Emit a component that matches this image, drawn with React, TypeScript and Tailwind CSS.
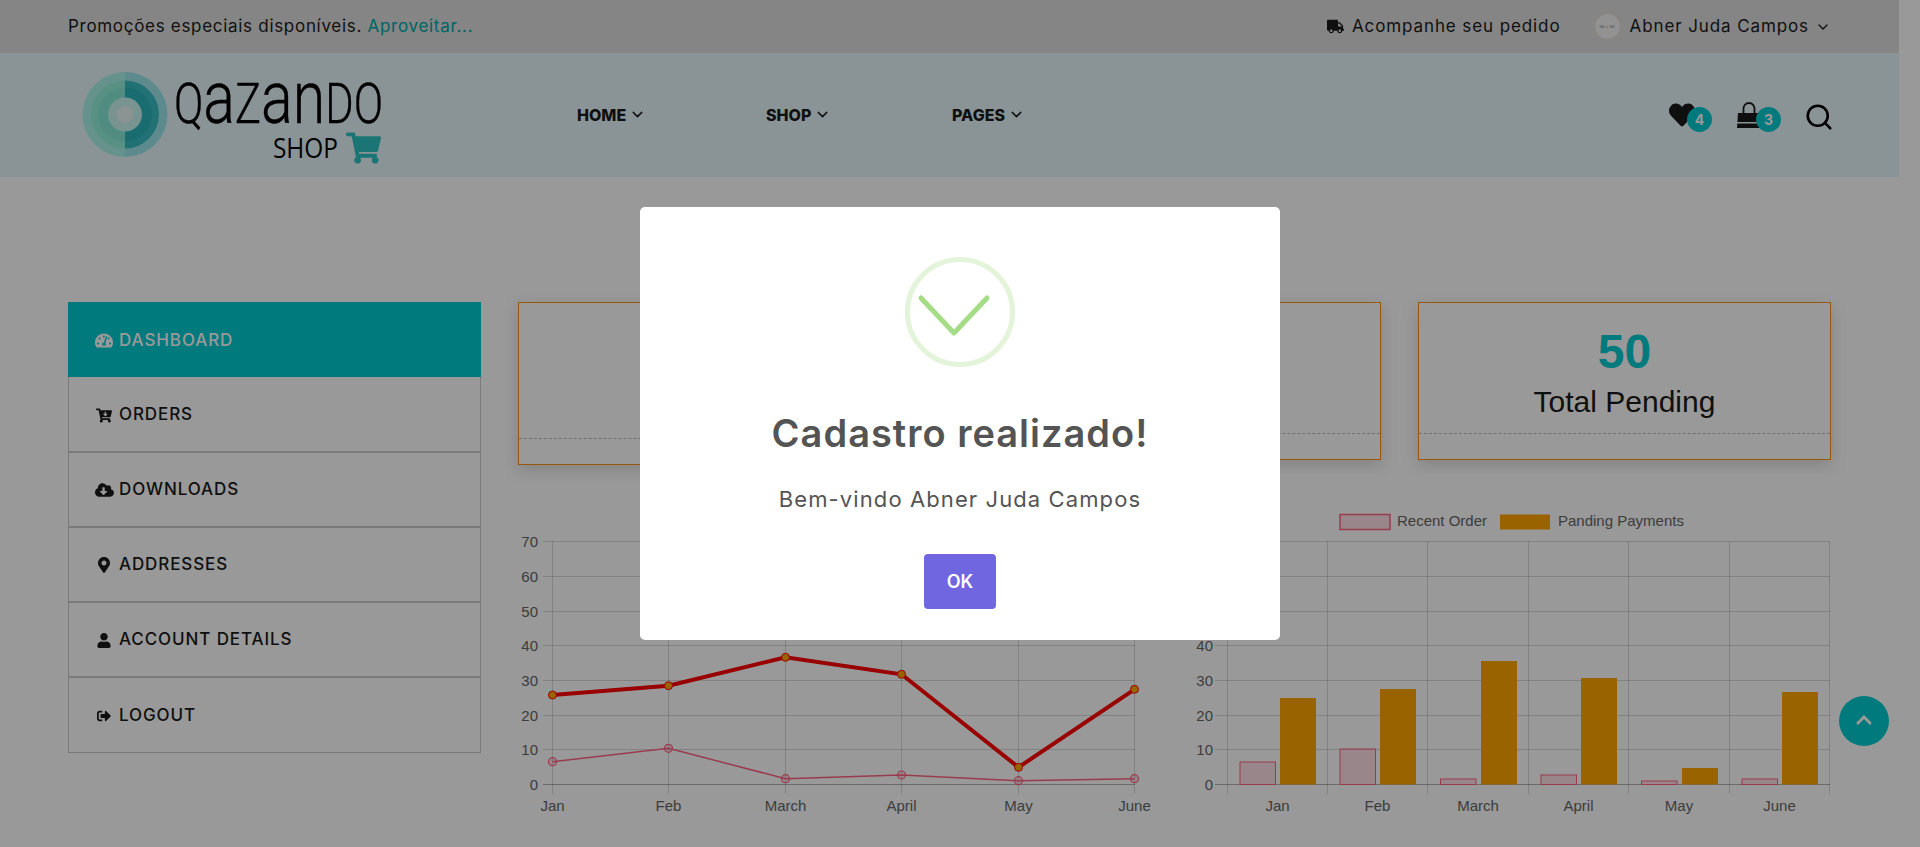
import React from 'react';
import { FaCartArrowDown, FaChevronUp, FaCloudDownloadAlt, FaHeart, FaMapMarkerAlt, FaShoppingCart, FaSignOutAlt, FaTachometerAlt, FaTruck, FaUser } from 'react-icons/fa';
import { ChevronDown, Search } from 'lucide-react';

const menu = [
  { label: 'DASHBOARD', icon: FaTachometerAlt, size: 'w-[18px] h-[17px]' },
  { label: 'ORDERS', icon: FaCartArrowDown, size: 'w-[16px] h-[15px]' },
  { label: 'DOWNLOADS', icon: FaCloudDownloadAlt, size: 'w-[19px] h-[16px]' },
  { label: 'ADDRESSES', icon: FaMapMarkerAlt, size: 'w-[12px] h-[16px]' },
  { label: 'ACCOUNT DETAILS', icon: FaUser, size: 'w-[14px] h-[15px]' },
  { label: 'LOGOUT', icon: FaSignOutAlt, size: 'w-[16px] h-[14px]' },
];

const months = ['Jan', 'Feb', 'March', 'April', 'May', 'June'];
const gridY = [541.5, 576.5, 611.5, 645.5, 680.5, 715.5, 749.5];
const zeroY = 784.5;
const lineX = [552.5, 668.5, 785.5, 901.5, 1018.5, 1134.5];
const redY = [695, 685.7, 657.3, 674.3, 767.3, 689.3];
const pinkY = [761.7, 748.3, 778.7, 775, 780.7, 778.7];
const barX = [1227.5, 1327.5, 1427.5, 1528.5, 1628.5, 1729.5, 1829.5];
const barPink = [
  [1240, 762],
  [1340, 749],
  [1440.5, 779],
  [1541, 775],
  [1641.5, 781],
  [1742, 779],
];
const barOrange = [
  [1280, 698],
  [1380, 689],
  [1481, 661],
  [1581, 678],
  [1682, 768],
  [1782, 692],
];
const chartFont = 'Liberation Sans, sans-serif';

function points(xs: number[], ys: number[]) {
  return xs.map((x, i) => `${x},${ys[i]}`).join(' ');
}

function YLabels({ x }: { x: number }) {
  return (
    <>
      {['70', '60', '50', '40', '30', '20', '10', '0'].map((v, i) => (
        <text key={v} x={x} y={(i === 7 ? zeroY : gridY[i]) + 5} textAnchor="end" fontSize="15" fill="#666666" fontFamily={chartFont}>
          {v}
        </text>
      ))}
    </>
  );
}

function LineChart() {
  return (
    <svg viewBox="518 500 640 330" className="w-[640px] h-[330px]">
      {gridY.map(y => (
        <line key={y} x1={543} x2={1135} y1={y} y2={y} stroke="#000" strokeOpacity="0.15" />
      ))}
      <line x1={543} x2={1135} y1={zeroY} y2={zeroY} stroke="#000" strokeOpacity="0.3" />
      {lineX.map(x => (
        <line key={x} x1={x} x2={x} y1={541} y2={794} stroke="#000" strokeOpacity="0.15" />
      ))}
      <YLabels x={538} />
      {months.map((m, i) => (
        <text key={m} x={lineX[i]} y={811} textAnchor="middle" fontSize="15" fill="#666666" fontFamily={chartFont}>
          {m}
        </text>
      ))}
      <polyline points={points(lineX, pinkY)} fill="none" stroke="#ff6384" strokeWidth="1.5" />
      {lineX.map((x, i) => (
        <circle key={x} cx={x} cy={pinkY[i]} r="4" fill="#ff6384" fillOpacity="0.2" stroke="#ff6384" strokeWidth="1.2" />
      ))}
      <polyline points={points(lineX, redY)} fill="none" stroke="#ff0000" strokeWidth="4" />
      {lineX.map((x, i) => (
        <circle key={x} cx={x} cy={redY[i]} r="4" fill="#ffa500" stroke="#ff0000" strokeWidth="1" />
      ))}
    </svg>
  );
}

function BarChart() {
  return (
    <svg viewBox="1190 500 641 330" className="w-[641px] h-[330px]">
      <rect x={1340} y={514.5} width={50} height={15} fill="#ff6384" fillOpacity="0.2" stroke="#ff6384" strokeWidth="1.5" />
      <text x={1397} y={526} fontSize="15" fill="#666666" fontFamily={chartFont}>Recent Order</text>
      <rect x={1500} y={514.5} width={50} height={15} fill="#ffa500" />
      <text x={1558} y={526} fontSize="15" fill="#666666" fontFamily={chartFont}>Panding Payments</text>
      {gridY.map(y => (
        <line key={y} x1={1215} x2={1830} y1={y} y2={y} stroke="#000" strokeOpacity="0.15" />
      ))}
      <line x1={1215} x2={1830} y1={zeroY} y2={zeroY} stroke="#000" strokeOpacity="0.3" />
      {barX.map(x => (
        <line key={x} x1={x} x2={x} y1={541} y2={794} stroke="#000" strokeOpacity="0.15" />
      ))}
      <YLabels x={1213} />
      {months.map((m, i) => (
        <text key={m} x={(barX[i] + barX[i + 1]) / 2} y={811} textAnchor="middle" fontSize="15" fill="#666666" fontFamily={chartFont}>
          {m}
        </text>
      ))}
      {barPink.map(([x, y]) => (
        <rect key={x} x={x} y={y} width={35.5} height={zeroY - y} fill="#ff6384" fillOpacity="0.2" stroke="#ff6384" strokeWidth="1" />
      ))}
      {barOrange.map(([x, y]) => (
        <rect key={x} x={x} y={y} width={36} height={zeroY - y} fill="#ffa500" />
      ))}
    </svg>
  );
}

function Logo() {
  return (
    <svg width="330" height="110" viewBox="68 60 330 110" className="shrink-0 overflow-visible">
      {[
        [42.5, '#a8f5e8', '#9ae6ec'],
        [34, '#95f0dd', '#38bcc4'],
        [27, '#85ecd5', '#2ab5bb'],
        [17, '#c8f5f0', '#c8f5f0'],
        [8.5, '#e8f5f5', '#e8f5f5'],
      ].map(([r, left, right]) => (
        <g key={r as number}>
          <path d={`M125 ${114.5 - (r as number)} a${r} ${r} 0 0 0 0 ${2 * (r as number)} z`} fill={left as string} />
          <path d={`M125 ${114.5 - (r as number)} a${r} ${r} 0 0 1 0 ${2 * (r as number)} z`} fill={right as string} />
        </g>
      ))}
      <text x={174} y={123} fontWeight="300" fill="#000" stroke="#000" strokeWidth="0.4" fontFamily="Roboto, sans-serif" textLength="209" lengthAdjust="spacingAndGlyphs">
        <tspan fontSize="55">Q</tspan>
        <tspan fontSize="75">a</tspan>
        <tspan fontSize="55">Z</tspan>
        <tspan fontSize="75">an</tspan>
        <tspan fontSize="55">DO</tspan>
      </text>
      <text x={273} y={158} fontSize="28" fill="#000" fontFamily="Open Sans, sans-serif" textLength="65" lengthAdjust="spacingAndGlyphs">SHOP</text>
    </svg>
  );
}

function BagIcon() {
  return (
    <svg viewBox="0 0 24 26" className="w-[24px] h-[26px]">
      <path d="M6.5 12V6.5a5.5 5.5 0 0 1 11 0V12" fill="none" stroke="#1a1a1a" strokeWidth="1.8" />
      <path d="M1 11h22l1 15H0z" fill="#1a1a1a" />
      <rect x="0" y="20" width="24" height="1.5" fill="#e6f7fa" />
    </svg>
  );
}

export default function App() {
  return (
    <div className="relative h-[847px] overflow-hidden bg-white font-['Inter',sans-serif] text-[#1a1a1a]">
      <div className="w-[1899px]">
        {/* top bar */}
        <div className="h-[53px] bg-[#dedede] pl-[68px] pr-[68px] flex items-center justify-between text-[17px]">
          <p className="tracking-[0.7px]">
            Promoções especiais disponíveis. <a className="text-[#00a5a8]">Aproveitar...</a>
          </p>
          <div className="flex items-center tracking-[0.9px]">
            <FaTruck className="w-[17px] h-[17px] mr-[8px]" />
            <span>Acompanhe seu pedido</span>
            <span className="ml-[33px] mr-[9px] w-[27px] h-[27px] rounded-full bg-[#f3f3f3] border border-[#e8d8c8] flex items-center justify-center text-[4px] tracking-normal text-[#777]">50 x 50</span>
            <span>Abner Juda Campos</span>
            <ChevronDown className="w-[16px] h-[16px] ml-[6px]" />
          </div>
        </div>
        {/* header */}
        <div className="h-[124px] bg-[#e6f7fa] pr-[68px] flex items-center">
          <div className="ml-[68px] relative">
            <Logo />
            <FaShoppingCart className="absolute left-[278px] top-[71px] w-[35px] h-[34px] text-[#2fc4c4]" />
          </div>
          <nav className="ml-[179px] -mt-px flex items-center font-extrabold text-[16px] text-[#1a1a1a]">
            <a className="flex items-center w-[189px]">HOME<ChevronDown className="w-[17px] h-[17px] ml-[3px]" /></a>
            <a className="flex items-center w-[186px]">SHOP<ChevronDown className="w-[17px] h-[17px] ml-[3px]" /></a>
            <a className="flex items-center">PAGES<ChevronDown className="w-[17px] h-[17px] ml-[3px]" /></a>
          </nav>
          <div className="ml-auto flex items-center">
            <div className="relative mr-[42px]">
              <FaHeart className="w-[26px] h-[26px]" />
              <span className="absolute left-[18px] top-[5px] w-[25px] h-[25px] rounded-full bg-[#00cccf] text-white text-[14px] font-bold flex items-center justify-center">4</span>
            </div>
            <div className="relative mr-[43px]">
              <BagIcon />
              <span className="absolute left-[19px] top-[5px] w-[25px] h-[25px] rounded-full bg-[#00cccf] text-white text-[14px] font-bold flex items-center justify-center">3</span>
            </div>
            <Search className="w-[30px] h-[30px] mt-[3px] -mr-[3px] text-black" strokeWidth={2.1} />
          </div>
        </div>

        <main className="pt-[125px] pl-[68px] pr-[68px] flex gap-[37px]">
          {/* sidebar */}
          <ul className="w-[413px] shrink-0 border-x border-[#ccc] h-fit">
            {menu.map((item, i) => (
              <li
                key={item.label}
                className={`h-[75px] flex items-center text-[17px] font-medium tracking-[0.9px] border-[#ccc] ${i === 0 ? 'bg-[#00cccf] text-white -mx-px pl-[21px] pt-[2px]' : 'pl-[20px] pt-[1px] border-b-2 last:border-b'} ${i === 1 ? 'mt-px' : ''}`}
              >
                <span className="w-[30px] flex justify-center">
                  <item.icon className={item.size} />
                </span>
                {item.label}
              </li>
            ))}
          </ul>

          <div className="w-[1313px]">
            {/* cards */}
            <div className="flex items-start justify-between">
              {[
                { h: 'h-[163px]', dash: 'mt-[135px]' },
                { h: 'h-[158px]', dash: 'mt-[130px]' },
              ].map((c, i) => (
                <div key={i} className={`w-[413px] ${c.h} border border-[#ff9010] shadow-[0_5px_15px_rgba(0,0,0,0.15)]`}>
                  <div className={`${c.dash} border-t border-dashed border-[#bbb]`} />
                </div>
              ))}
              <div className="w-[413px] h-[158px] border border-[#ff9010] shadow-[0_5px_15px_rgba(0,0,0,0.15)] text-center font-['Liberation_Sans',sans-serif]">
                <div className="mt-[22px] text-[48px] leading-[54px] font-bold text-[#00cccf]">50</div>
                <div className="mt-[5px] text-[30px] leading-[36px] text-[#1a1a1a]">Total Pending</div>
                <div className="mt-[13px] border-t border-dashed border-[#bbb]" />
              </div>
            </div>
            {/* charts */}
            <div className="mt-[35px] flex gap-[32px]">
              <LineChart />
              <BarChart />
            </div>
          </div>
        </main>
      </div>

      <a className="fixed right-[31px] bottom-[101px] w-[50px] h-[50px] rounded-full bg-[#00cccf] text-white flex items-center justify-center">
        <FaChevronUp className="w-[18px] h-[18px] -mt-[3px]" />
      </a>

      {/* modal */}
      <div className="fixed inset-0 bg-black/40 flex items-center justify-center">
        <div className="w-[640px] h-[433px] bg-white rounded-[5px] flex flex-col items-center pt-[50px] text-[#545454]">
          <div className="w-[110px] h-[110px] rounded-full border-[5px] border-[#e4f4da] shrink-0 relative">
            <svg viewBox="0 0 100 100" className="absolute inset-0 w-[100px] h-[100px]">
              <polyline points="11,36 44,71 77,36" fill="none" stroke="#a5dc86" strokeWidth="5" strokeLinecap="round" strokeLinejoin="round" />
            </svg>
          </div>
          <h2 className="mt-[43px] text-[38px] leading-[46px] font-semibold tracking-[1px]">Cadastro realizado!</h2>
          <p className="mt-[29px] text-[22px] leading-[28px] tracking-[1.1px]">Bem-vindo Abner Juda Campos</p>
          <button className="mt-[41px] w-[72px] h-[55px] rounded-[4px] bg-[#7066e0] text-white text-[18px] font-semibold">OK</button>
        </div>
      </div>
    </div>
  );
}
